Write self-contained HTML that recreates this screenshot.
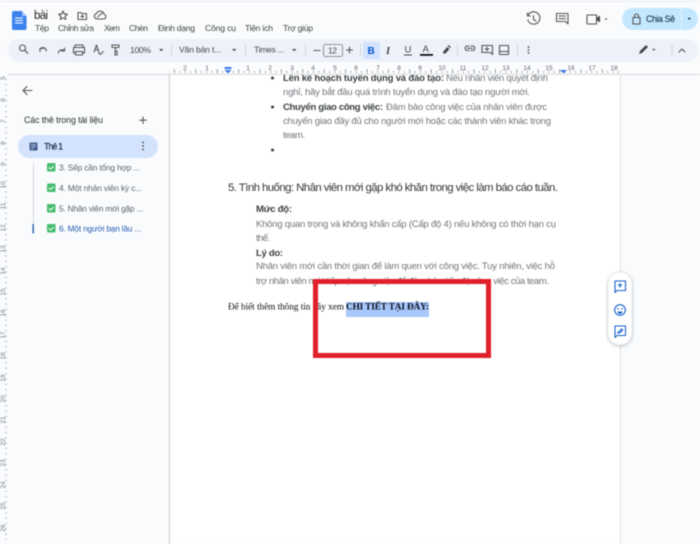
<!DOCTYPE html>
<html lang="vi"><head><meta charset="utf-8"><title>bài</title>
<style>
html,body{margin:0;padding:0;width:700px;height:544px;overflow:hidden;background:#f9fbfd}
svg{display:block;filter:blur(.45px)}
text{font-family:"Liberation Sans","Noto Sans CJK SC",sans-serif;white-space:pre}
.m{font-size:8.600px;fill:#444746}
.t{font-size:8.600px;fill:#444746}
.b{font-size:9.500px;fill:#70757a}
.bb{font-size:9.500px;fill:#3c4043;font-weight:bold}
.s{font-size:8.300px;fill:#5f6368}
.r{font-size:6.500px;fill:#5f6368}
.ic{fill:none;stroke:#555;stroke-width:1.100;stroke-linecap:round;stroke-linejoin:round}
.bl{fill:none;stroke:#1a63c8;stroke-width:1.100;stroke-linejoin:round}
</style></head><body>
<svg width="700" height="544" viewBox="0 0 700 544" xmlns="http://www.w3.org/2000/svg">
<defs>
<pattern id="hs" x="168.600" y="0" width="5.350" height="544" patternUnits="userSpaceOnUse"><rect width=".7" height="2" y="71" fill="#80868b"/></pattern>
<pattern id="hb" x="174" y="0" width="21.400" height="544" patternUnits="userSpaceOnUse"><rect width=".7" height="4" y="69" fill="#80868b"/></pattern>
<pattern id="vs" x="0" y="79" width="20" height="5.350" patternUnits="userSpaceOnUse"><rect x="5" width="2" height=".7" fill="#a0a4a8"/></pattern>
<clipPath id="doc"><rect x="170" y="75" width="450" height="469"/></clipPath>
</defs>
<rect width="700" height="544" fill="#f9fbfd"/>
<rect x="0" y="1" width="700" height="1" fill="#e8eaed"/>

<!-- logo -->
<path d="M14 11h8l4.500 5v12.500a1.500 1.500 0 0 1-1.500 1.500H13.500a1.500 1.500 0 0 1-1.500-1.500V13a2 2 0 0 1 2-2z" fill="#3b82ee"/>
<path d="M22 11l4.500 5H22z" fill="#a7c7fa"/>
<path d="M15 18h8M15 20.500h8M15 23h8" stroke="#fff" stroke-width="1"/>
<text x="34" y="19" style="font-size:11.500px;fill:#1f1f1f" textLength="14">bài</text>
<path class="ic" d="M63 11l1.300 2.900 3.100.3-2.300 2.100.7 3.100-2.800-1.600-2.800 1.600.7-3.100-2.300-2.100 3.100-.3z" stroke-width="1"/>
<path class="ic" d="M78 12.500h3l1 1.200h4.500v5.800H78z M82.300 15v3M80.800 16.500h3" stroke-width="1"/>
<path class="ic" d="M97 19h6.500a2.500 2.500 0 0 0 .5-4.900 4 4 0 0 0-7.500-.6A2.800 2.800 0 0 0 97 19z M97.500 17l5-4" stroke-width="1"/>
<g class="m">
<text x="35" y="31" textLength="14">Tệp</text>
<text x="58" y="31" textLength="36">Chỉnh sửa</text>
<text x="104" y="31" textLength="16">Xem</text>
<text x="129" y="31" textLength="19">Chèn</text>
<text x="158" y="31" textLength="37">Định dạng</text>
<text x="205" y="31" textLength="31">Công cụ</text>
<text x="245" y="31" textLength="28">Tiện ích</text>
<text x="283" y="31" textLength="30">Trợ giúp</text>
</g>

<!-- top right -->
<path class="ic" d="M528 15.500a6.200 6.200 0 1 1-.2 4.500M527.500 13v3h3M533.500 15.500v4l2.500 1.500" stroke-width="1.300"/>
<path class="ic" d="M556.500 13.500h11.500v10.500l-2.500-2.500h-9z M559 16h6.500M559 18.700h6.500" stroke-width="1.200"/>
<path class="ic" d="M587.500 15h9v9h-9a1 1 0 0 1-.5-.5V15.500z" stroke-width="1.300"/>
<path d="M596.500 18l3.500-2.500v7l-3.500-2.500z" fill="#444746"/>
<path d="M604.500 18.500l1.500 1.500 1.500-1.500z" fill="#444746"/>
<rect x="622" y="8" width="76" height="22" rx="11" fill="#c2e7ff"/>
<rect x="681" y="8" width="1" height="22" fill="#e3f3fd"/>
<path class="ic" d="M633 17.500h7v6.500h-7z M634.500 17.500v-1.500a2 2 0 0 1 4 0v1.500" stroke="#001d35" stroke-width="1.100"/>
<text x="646" y="22" style="font-size:8.800px;fill:#243c52;stroke:#243c52;stroke-width:.15" textLength="29">Chia Sẻ</text>
<path d="M687.500 18l1.800 1.800 1.800-1.800z" fill="#001d35"/>

<!-- toolbar -->
<rect x="8" y="39" width="690" height="23" rx="11.500" fill="#edf2fa"/>
<rect x="363" y="42" width="17" height="17" rx="2" fill="#d3e3fd"/>
<g class="ic" stroke-width="1.100">
<circle cx="22.500" cy="48" r="3"/><path d="M24.800 50.300l3 3"/>
<path d="M40 51.500l0-3 3 0M40.200 48.700c2-2 6-1.500 6 2.300"/>
<path d="M64.500 48v3h-3M64.200 50.800c-2-1.800-5.500-1-5.800 2.200"/>
<path d="M75 47.500v-2.500h8v2.500M75 53h-1.500v-5.500h11V53H83M75.500 51.500h7v3.500h-7z"/>
<path d="M94 52l2.500-7 2.500 7M95 49.800h3M98.500 53l1.800 1.500 3-3"/>
<path d="M112 45h7v2.500h-7zM115.500 47.500v3.500l1-.0M115 51h2v4h-2z"/>
<path d="M314 50.500h6M349.500 47v6M346.500 50h6"/>
<path d="M469 50.500h-2a2.300 2.300 0 0 1 0-4.500h2M471 46h2a2.300 2.300 0 0 1 0 4.500h-2M467.500 48.300h5"/>
<path d="M482 45.500h10.500v9l-2-2H482zM487 47v4M485 49h4"/>
<path d="M499.500 45.500h9v9h-9zM499.500 51.500h9"/>
</g>
<text x="130" y="53" class="t" textLength="21">100%</text>
<path d="M159 49l2.200 2.200 2.200-2.200z" fill="#444746"/>
<rect x="171" y="44" width="1" height="12" fill="#d3d5d8"/>
<text x="179" y="52.500" class="t" textLength="42">Văn bản t...</text>
<path d="M232 49l2.200 2.200 2.200-2.200z" fill="#444746"/>
<rect x="245" y="44" width="1" height="12" fill="#d3d5d8"/>
<text x="254" y="52.500" class="t" textLength="30">Times ...</text>
<path d="M292 49l2.200 2.200 2.200-2.200z" fill="#444746"/>
<rect x="305" y="44" width="1" height="12" fill="#d3d5d8"/>
<rect x="323.500" y="44.500" width="19" height="12" rx="2" fill="none" stroke="#747775" stroke-width=".8"/>
<text x="328" y="53.500" class="t" textLength="9">12</text>
<rect x="360" y="44" width="1" height="12" fill="#d3d5d8"/>
<text x="367.500" y="54" style="font-size:10px;font-weight:bold;fill:#0b57d0" textLength="6">B</text>
<text x="386" y="54" style="font-size:10.500px;font-style:italic;fill:#444746;font-family:'Liberation Serif',serif;font-weight:bold">I</text>
<text x="404.500" y="52.500" style="font-size:9.500px;fill:#444746" textLength="7">U</text><rect x="404" y="54.500" width="8" height="1" fill="#444746"/>
<text x="422.500" y="52" style="font-size:9.500px;fill:#444746" textLength="7">A</text><rect x="420" y="54" width="13" height="1.800" fill="#111"/>
<path d="M443 52l4-5 2.500 2-4 4.500h-2.500z" fill="#444746"/><path d="M447.500 46l1-1 2.500 2-1 1z" fill="#444746"/>
<rect x="457" y="44" width="1" height="12" fill="#d3d5d8"/>
<rect x="517" y="44" width="1" height="12" fill="#d3d5d8"/>
<circle cx="528.500" cy="47" r=".9" fill="#444746"/><circle cx="528.500" cy="50" r=".9" fill="#444746"/><circle cx="528.500" cy="53" r=".9" fill="#444746"/>
<path d="M639 54l1-3 6-6 2 2-6 6z" fill="#444746"/>
<path d="M652 49l1.800 1.800 1.800-1.800z" fill="#444746"/>
<rect x="671.500" y="44" width="1" height="12" fill="#d3d5d8"/>
<path class="ic" d="M679 52l3-3 3 3"/>

<!-- ruler -->
<rect x="8" y="74" width="692" height="1" fill="#d5d7da"/>
<rect x="169" y="62" width="451" height="12" fill="#fbfcfd"/>
<rect x="169" y="62" width="451" height="12" fill="url(#hs)"/>
<rect x="169" y="62" width="451" height="12" fill="url(#hb)"/>
<g class="r" text-anchor="middle">
<text x="185" y="70">2</text><text x="207" y="70">1</text><text x="248" y="70">1</text><text x="270" y="70">2</text><text x="292" y="70">3</text><text x="313" y="70">4</text><text x="335" y="70">5</text><text x="356" y="70">6</text><text x="378" y="70">7</text><text x="399" y="70">8</text><text x="420" y="70">9</text><text x="442" y="70">10</text><text x="463" y="70">11</text><text x="485" y="70">12</text><text x="506" y="70">13</text><text x="527" y="70">14</text><text x="549" y="70">15</text><text x="571" y="70">16</text><text x="592" y="70">17</text><text x="614" y="70">18</text>
</g>
<rect x="224.500" y="67" width="7" height="2" fill="#3b78e7"/><path d="M224.500 70h7l-3.500 3.500z" fill="#3b78e7"/>
<path d="M560 70h7l-3.500 3.500z" fill="#3b78e7"/>

<!-- vertical ruler -->
<rect x="0" y="75" width="8" height="469" fill="url(#vs)"/>
<g style="font-size:6.500px;fill:#777b80" text-anchor="middle">
<text transform="translate(5 78) rotate(-90)">5</text><text transform="translate(5 100) rotate(-90)">6</text><text transform="translate(5 121) rotate(-90)">7</text><text transform="translate(5 143) rotate(-90)">8</text><text transform="translate(5 164) rotate(-90)">9</text><text transform="translate(5 185) rotate(-90)">10</text><text transform="translate(5 206) rotate(-90)">11</text><text transform="translate(5 228) rotate(-90)">12</text><text transform="translate(5 249) rotate(-90)">13</text><text transform="translate(5 271) rotate(-90)">14</text><text transform="translate(5 292) rotate(-90)">15</text><text transform="translate(5 313) rotate(-90)">16</text><text transform="translate(5 335) rotate(-90)">17</text><text transform="translate(5 356) rotate(-90)">18</text><text transform="translate(5 378) rotate(-90)">19</text><text transform="translate(5 399) rotate(-90)">20</text><text transform="translate(5 420) rotate(-90)">21</text><text transform="translate(5 442) rotate(-90)">22</text><text transform="translate(5 463) rotate(-90)">23</text><text transform="translate(5 485) rotate(-90)">24</text><text transform="translate(5 506) rotate(-90)">25</text><text transform="translate(5 528) rotate(-90)">26</text>
</g>

<!-- sidebar -->
<path class="ic" d="M32 90.500H23.500M27 86.500l-4 4 4 4" stroke-width="1.200" stroke="#333"/>
<text x="24" y="123" style="font-size:8.800px;fill:#444746;stroke:#444746;stroke-width:.1" textLength="79">Các thẻ trong tài liệu</text>
<path class="ic" d="M143 117v6.500M139.800 120.200h6.500"/>
<rect x="18" y="135" width="140" height="23" rx="11.500" fill="#d3e3fd"/>
<rect x="29.500" y="142.500" width="8" height="8" rx="1" fill="#3f5a8a"/>
<path d="M31 144.500h5M31 146.500h5M31 148.500h3" stroke="#d3e3fd" stroke-width=".8"/>
<text x="44" y="149.500" style="font-size:8.800px;fill:#1f2f4f;stroke:#1f2f4f;stroke-width:.2" textLength="19">Thẻ 1</text>
<circle cx="143" cy="142.500" r=".9" fill="#444746"/><circle cx="143" cy="146" r=".9" fill="#444746"/><circle cx="143" cy="149.500" r=".9" fill="#444746"/>
<rect x="33" y="163" width="1" height="61" fill="#d5d7da"/>
<rect x="32.500" y="224" width="1.300" height="9.500" fill="#1a56b0"/>
<g>
<rect x="47" y="163" width="8.500" height="8.500" rx="1" fill="#46bd6f"/>
<rect x="47" y="183.500" width="8.500" height="8.500" rx="1" fill="#46bd6f"/>
<rect x="47" y="204" width="8.500" height="8.500" rx="1" fill="#46bd6f"/>
<rect x="47" y="224" width="8.500" height="8.500" rx="1" fill="#46bd6f"/>
<path d="M48.800 167.300l1.800 1.800 3-3M48.800 187.800l1.800 1.800 3-3M48.800 208.300l1.800 1.800 3-3M48.800 228.300l1.800 1.800 3-3" fill="none" stroke="#fff" stroke-width="1"/>
</g>
<text x="59" y="170.500" class="s" textLength="81">3. Sếp cần tổng hợp ...</text>
<text x="59" y="191" class="s" textLength="83">4. Một nhân viên kỳ c...</text>
<text x="59" y="211.500" class="s" textLength="84">5. Nhân viên mới gặp ...</text>
<text x="59" y="231.500" class="s" textLength="82" style="fill:#2a5db0">6. Một người bạn lâu ...</text>

<!-- page -->
<rect x="169" y="75" width="451" height="469" fill="#fff"/>
<rect x="169" y="75" width="1" height="469" fill="#c9cbce"/>
<rect x="620" y="75" width="1" height="469" fill="#dfe1e5"/>
<g clip-path="url(#doc)">
<circle cx="272.500" cy="78" r="1.500" fill="#3c4043"/>
<text x="283" y="81" class="bb" textLength="161">Lên kế hoạch tuyển dụng và đào tạo:</text>
<text x="446" y="81" class="b" textLength="102">Nếu nhân viên quyết định</text>
<text x="283" y="95" class="b" textLength="247">nghỉ, hãy bắt đầu quá trình tuyển dụng và đào tạo người mới.</text>
<circle cx="272.500" cy="107" r="1.500" fill="#3c4043"/>
<text x="283" y="110" class="bb" textLength="100">Chuyển giao công việc:</text>
<text x="386" y="110" class="b" textLength="161">Đảm bảo công việc của nhân viên được</text>
<text x="283" y="124" class="b" textLength="268">chuyển giao đầy đủ cho người mới hoặc các thành viên khác trong</text>
<text x="283" y="138" class="b" textLength="22">team.</text>
<circle cx="272.500" cy="150" r="1.500" fill="#3c4043"/>
<text x="228" y="191" style="font-size:11.400px;fill:#33363a" textLength="330">5. Tình huống: Nhân viên mới gặp khó khăn trong việc làm báo cáo tuần.</text>
<text x="256" y="212" class="bb" textLength="36">Mức độ:</text>
<text x="256" y="227" class="b" textLength="300">Không quan trọng và không khẩn cấp (Cấp độ 4) nếu không có thời hạn cụ</text>
<text x="256" y="241" class="b" textLength="14">thể.</text>
<text x="256" y="256" class="bb" textLength="27">Lý do:</text>
<text x="256" y="269" class="b" textLength="299">Nhân viên mới cần thời gian để làm quen với công việc. Tuy nhiên, việc hỗ</text>
<text x="256" y="284" class="b" textLength="293">trợ nhân viên mới tiếp cận công việc để đảm bảo tiến độ công việc của team.</text>
<rect x="346" y="302" width="83" height="15" fill="#a8c7fa"/>
<text x="228" y="309.500" style="font-size:9.300px;fill:#111;font-family:'Liberation Serif','Noto Serif CJK SC',serif" textLength="116">Để biết thêm thông tin hãy xem</text>
<text x="346" y="309.500" style="font-size:9.300px;fill:#0a1020;font-weight:bold;font-family:'Liberation Serif','Noto Serif CJK SC',serif" textLength="83">CHI TIẾT TẠI ĐÂY:</text>
</g>
<rect x="315.500" y="281.500" width="173" height="74" fill="none" stroke="#e0202a" stroke-width="5"/>

<!-- floating pill -->
<rect x="608" y="272" width="24" height="73" rx="12" fill="#fff" stroke="#e4e6e9" stroke-width=".8" style="filter:drop-shadow(0 1px 1.500px rgba(60,64,67,.3))"/>
<path class="bl" d="M615 281h10.500v9.500H617l-2 2z M620 283v4.500M617.800 285.200h4.400"/>
<circle class="bl" cx="620" cy="310" r="5.300"/>
<circle cx="618" cy="308.800" r=".8" fill="#1a63c8"/><circle cx="622" cy="308.800" r=".8" fill="#1a63c8"/>
<path d="M617.500 311.500h5a2.500 2.500 0 0 1-5 0z" fill="#1a63c8"/>
<path class="bl" d="M615 326h10.500v9.500H617l-2 2z M617.500 333l4-4 1.200 1.200-3 2.800z"/>
</svg>
</body></html>
